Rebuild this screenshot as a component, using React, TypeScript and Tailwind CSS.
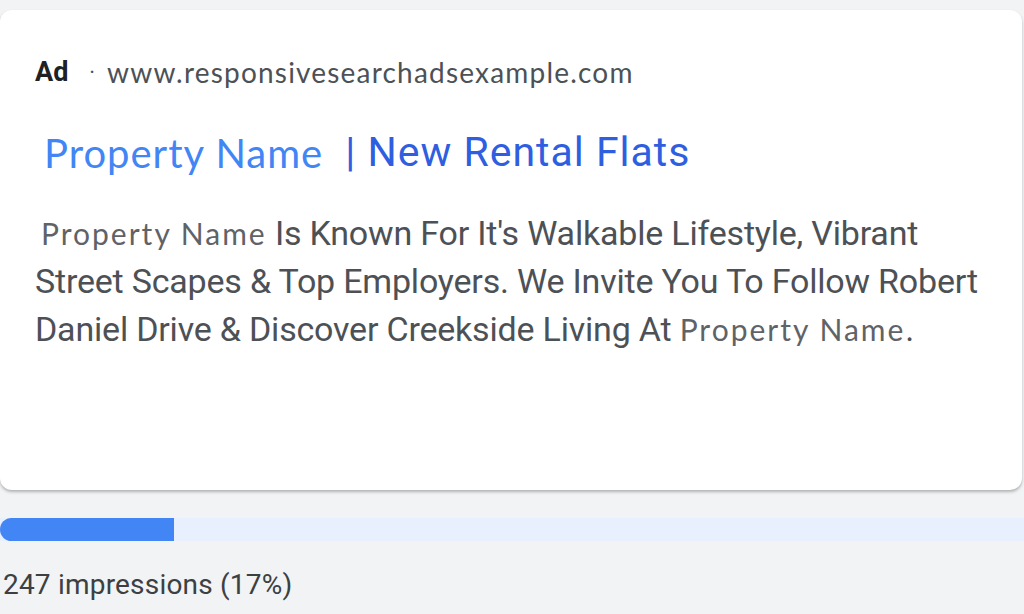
const App = () => {
  return (
    <div
      className="w-[1024px] h-[614px] overflow-hidden bg-[#f1f3f4] pt-[10px]"
      style={{ fontFamily: 'Roboto, "Liberation Sans", sans-serif' }}
    >
      <div className="w-[1022px] h-[480px] bg-white rounded-[12px] shadow-[0_2px_3px_rgba(60,64,67,0.35)] pl-[35px] pt-[45px]">
        <div className="flex items-center h-[34px]">
          <span className="text-[27px] font-bold text-[#202124]">Ad</span>
          <span className="text-[22px] text-[#4d5156] ml-[21px] mr-[12px]">·</span>
          <span
            className="text-[28px] tracking-[1.2px] text-[#4d5156]"
            style={{ fontFamily: 'Lato, sans-serif' }}
          >
            www.responsivesearchadsexample.com
          </span>
        </div>
        <div className="flex items-center h-[56px] mt-[36px] ml-[9px]">
          <span
            className="text-[40px] tracking-[1px] text-[#4285f4]"
            style={{ fontFamily: 'Lato, sans-serif' }}
          >
            Property Name
          </span>
          <span className="text-[41px] tracking-[1px] text-[#2f5fe0] ml-[22px]">| New Rental Flats</span>
        </div>
        <div className="mt-[28px] w-[960px] text-[34px] tracking-[-0.2px] leading-[48px] text-[#4d5156]">
          <span
            className="text-[30px] tracking-[2px] text-[#5f6368] ml-[6px]"
            style={{ fontFamily: 'Lato, sans-serif' }}
          >
            Property Name
          </span>{' '}
          Is Known For It's Walkable Lifestyle, Vibrant Street Scapes &amp; Top Employers. We Invite You To Follow Robert
          Daniel Drive &amp; Discover Creekside Living At{' '}
          <span
            className="text-[30px] tracking-[2px] text-[#5f6368]"
            style={{ fontFamily: 'Lato, sans-serif' }}
          >
            Property Name
          </span>
          .
        </div>
      </div>
      <div className="mt-[28px] h-[23px] w-full bg-[#e8f0fe]">
        <div className="h-full w-[174px] bg-[#4285f4] rounded-l-full" />
      </div>
      <div className="mt-[23px] pl-[3px] text-[28px] tracking-[0.2px] text-[#3c4043]">247 impressions (17%)</div>
    </div>
  );
};

export default App;
